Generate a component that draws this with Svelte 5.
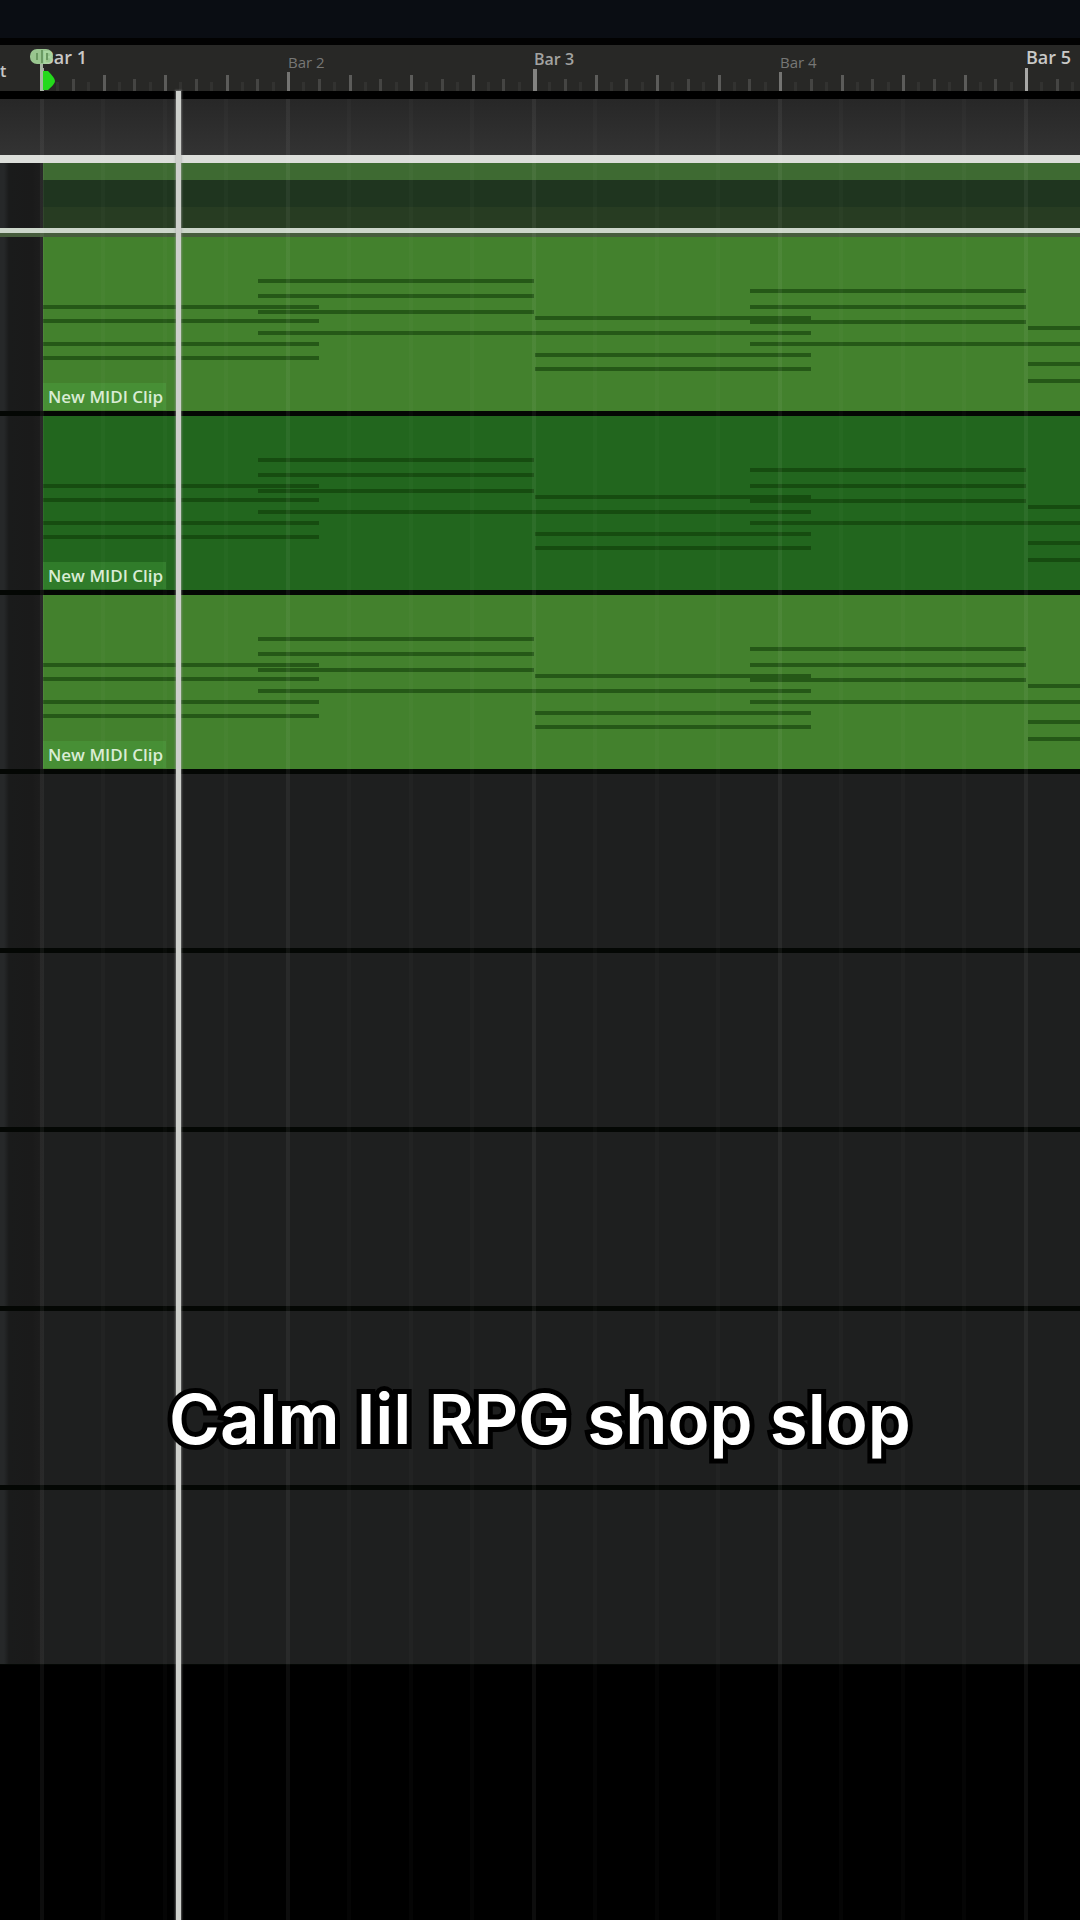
<script lang="ts">
  type Note = { x: number; y: number; w: number };
  type Track = { id: number; clip?: { name: string; tone: 'light' | 'dark' } };

  const BAR = 246;
  const BARS = 8;
  const NOTE_LENGTH = 276;

  const labels = [
    { text: 'Bar 1', level: 'major' },
    { text: 'Bar 2', level: 'minor' },
    { text: 'Bar 3', level: 'middle' },
    { text: 'Bar 4', level: 'minor' },
    { text: 'Bar 5', level: 'major' },
  ];

  // chord start, then the lane of every voice in it
  const chords = [
    { x: 0, lanes: [68, 82, 105, 119] },
    { x: 215, lanes: [42, 57, 73] },
    { x: 492, lanes: [79, 116, 130] },
    { x: 707, lanes: [52, 68, 83] },
    { x: 985, lanes: [89, 125, 142] },
  ];

  const notes: Note[] = [
    ...chords.flatMap((c) => c.lanes.map((y) => ({ x: c.x, y, w: NOTE_LENGTH }))),
    { x: 215, y: 94, w: 553 },
    { x: 707, y: 105, w: 553 },
  ];

  const tracks: Track[] = [
    { id: 1, clip: { name: 'New MIDI Clip', tone: 'light' } },
    { id: 2, clip: { name: 'New MIDI Clip', tone: 'dark' } },
    { id: 3, clip: { name: 'New MIDI Clip', tone: 'light' } },
    { id: 4 },
    { id: 5 },
    { id: 6 },
    { id: 7 },
    { id: 8 },
  ];

  const ticks = Array.from({ length: BARS * 16 }, (_, i) => {
    const x = Math.round((i * BAR) / 16);
    if (i % 64 === 0) return { x, h: 23, w: 3, color: '#a8a8a6' };
    if (i % 32 === 0) return { x, h: 22, w: 4, color: '#838381' };
    if (i % 16 === 0) return { x, h: 19, w: 3, color: '#747472' };
    if (i % 4 === 0) return { x, h: 16, w: 3, color: '#5c5c5a' };
    if (i % 2 === 0) return { x, h: 12, w: 3, color: '#454543' };
    return { x, h: 9, w: 3, color: '#323230' };
  });
</script>

<main class="arranger">
  <div class="toolbar"></div>

  <header class="ruler">
    <div class="ruler-gutter">t</div>
    <div class="ruler-scale">
      <div class="labels">
        {#each labels as label (label.text)}
          <span class="label {label.level}">{label.text}</span>
        {/each}
      </div>
      <svg class="ticks" aria-hidden="true">
        {#each ticks as tick, i (i)}
          <rect x={tick.x - 1} y={23 - tick.h} width={tick.w} height={tick.h} fill={tick.color} />
        {/each}
      </svg>
      <svg class="start-marker" viewBox="0 0 30 46" aria-hidden="true">
        <rect x="0" y="4" width="23" height="15" rx="7" fill="#a5d79b" opacity="0.9" />
        <path d="M7 8v7M12 5v13M17 8v7" stroke="#6b9a62" stroke-width="2" />
        <rect x="10" y="19" width="3" height="27" fill="#a9b8a5" />
        <path d="M13 26h5q7 7 7 10t-7 9h-5z" fill="#24d91c" />
      </svg>
    </div>
  </header>

  <div class="timeline">
    <div class="lane-header"></div>

    <div class="selection">
      <div class="gutter"></div>
      <div class="selection-bands">
        <div class="band bright"></div>
        <div class="band deep"></div>
        <div class="band olive"></div>
      </div>
    </div>

    {#each tracks as track (track.id)}
      <section class="track">
        <div class="gutter"></div>
        {#if track.clip}
          <div class="clip {track.clip.tone}">
            <svg class="notes" aria-hidden="true">
              {#each notes as note, i (i)}
                <rect x={note.x} y={note.y} width={note.w} height="4" />
              {/each}
            </svg>
            <span class="clip-name">{track.clip.name}</span>
          </div>
        {/if}
      </section>
    {/each}

    <div class="void"></div>
    <div class="grid-lines"></div>
    <div class="playhead"></div>
  </div>

  <p class="caption">Calm lil RPG shop slop</p>
</main>

<style>
  :global(body) {
    margin: 0;
    background: #000;
  }
  .arranger {
    --gutter: 43px;
    position: relative;
    display: flex;
    flex-direction: column;
    min-height: 100vh;
    overflow: hidden;
    background: #000;
    font-family: 'Open Sans', 'Noto Sans', sans-serif;
  }
  .toolbar {
    height: 38px;
    background: #0a0d13;
  }

  .ruler {
    display: flex;
    height: 46px;
    border-top: 7px solid #020202;
    border-bottom: 8px solid #000;
    background: #282826;
  }
  .ruler-gutter {
    flex: none;
    width: 42px;
    padding-top: 14px;
    box-sizing: border-box;
    color: #c8c8c6;
    font-size: 16px;
    font-weight: 600;
    line-height: 24px;
  }
  .ruler-scale {
    position: relative;
    flex: 1;
    min-width: 0;
    display: flex;
    flex-direction: column;
    justify-content: space-between;
  }
  .labels {
    display: flex;
    height: 23px;
  }
  .label {
    flex: none;
    width: 246px;
    line-height: 24px;
    white-space: nowrap;
  }
  .label:last-child {
    flex: 1;
    width: auto;
  }
  .label.major {
    color: #c9c9c7;
    font-size: 18px;
    font-weight: 600;
  }
  .label.middle {
    color: #a3a3a1;
    font-size: 16px;
    line-height: 28px;
    font-weight: 600;
  }
  .label.minor {
    color: #777775;
    font-size: 15px;
    line-height: 34px;
  }
  .ticks {
    display: block;
    width: 100%;
    height: 23px;
  }
  .start-marker {
    position: absolute;
    left: -12px;
    top: 0;
    width: 30px;
    height: 46px;
  }

  .timeline {
    position: relative;
    flex: 1;
    display: flex;
    flex-direction: column;
  }
  .lane-header {
    height: 56px;
    background: linear-gradient(#272727, #333333);
  }
  .gutter {
    flex: none;
    width: var(--gutter);
    background: linear-gradient(90deg, #262829 4px, #1a1b1b 9px, #1a1a1a 32px, #1e1e1e);
  }
  .selection {
    display: flex;
    border-top: 8px solid #dcdeda;
    border-bottom: 5px solid #ccd6ca;
    box-shadow: 0 4px 0 #465c3c;
    z-index: 1;
  }
  .selection-bands {
    flex: 1;
  }
  .band.bright {
    height: 17px;
    background: #3e6a32;
  }
  .band.deep {
    height: 27px;
    background: #1f351f;
  }
  .band.olive {
    height: 21px;
    background: #273c22;
  }

  .track {
    display: flex;
    height: 174px;
    border-bottom: 5px solid #040704;
    background: #1e1f1f;
  }
  .track:first-of-type {
    padding-top: 4px;
  }
  .track:nth-last-child(4) {
    border-bottom-width: 1px;
  }
  .clip {
    flex: 1;
    min-width: 0;
    display: flex;
    flex-direction: column;
    justify-content: space-between;
    align-items: flex-start;
  }
  .clip.light {
    background: #43812d;
  }
  .clip.dark {
    background: #22661e;
  }
  .notes {
    width: 100%;
    height: 146px;
    fill: #0c3606;
    fill-opacity: 0.55;
  }
  .clip-name {
    margin-bottom: 1px;
    padding: 0 3px 0 5px;
    background: rgb(84 175 74 / 30%);
    color: #d9ecd4;
    font-size: 17px;
    font-weight: 600;
    line-height: 27px;
  }

  .void {
    flex: 1;
    background: #000;
  }
  .grid-lines {
    position: absolute;
    inset: 0 0 0 40px;
    z-index: 2;
    pointer-events: none;
    background: repeating-linear-gradient(
      90deg,
      rgb(255 255 255 / 5%) 0 4px,
      transparent 4px 61px,
      rgb(255 255 255 / 2%) 61px 65px,
      transparent 65px 123px,
      rgb(255 255 255 / 2%) 123px 127px,
      transparent 127px 184px,
      rgb(255 255 255 / 2%) 184px 188px,
      transparent 188px 246px
    );
  }
  .playhead {
    position: absolute;
    top: -8px;
    bottom: 0;
    left: 176px;
    z-index: 3;
    width: 5px;
    background: #cdcfcb;
    box-shadow: 0 0 2px 1px rgb(170 170 170 / 50%);
  }

  .caption {
    position: absolute;
    top: 1371px;
    left: 0;
    right: 0;
    z-index: 4;
    margin: 0;
    color: #fff;
    font-family: Inter, 'Liberation Sans', sans-serif;
    font-size: 69px;
    font-weight: 600;
    line-height: 96px;
    text-align: center;
    -webkit-text-stroke: 10px #000;
    paint-order: stroke fill;
    stroke-linejoin: round;
  }
</style>
